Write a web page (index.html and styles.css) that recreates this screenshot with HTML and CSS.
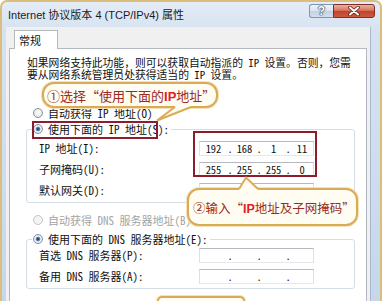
FILE: index.html
```html
<!DOCTYPE html>
<html lang="zh-CN">
<head>
<meta charset="utf-8">
<title>Internet 协议版本 4 (TCP/IPv4) 属性</title>
<link rel="stylesheet" href="styles.css">
</head>
<body>
<div class="frame">
  <div class="titlebar">
    <span class="title">Internet 协议版本 4 (TCP/IPv4) 属性</span>
    <div class="caption-btns">
      <span class="btn-help">?</span>
      <span class="btn-close">
        <svg width="14" height="10" viewBox="0 0 14 10">
          <path d="M3 1.5 L11 8.5 M11 1.5 L3 8.5" stroke="#6b1f17" stroke-width="3.6" stroke-linecap="round"/>
          <path d="M3 1.5 L11 8.5 M11 1.5 L3 8.5" stroke="#ffffff" stroke-width="2" stroke-linecap="round"/>
        </svg>
      </span>
    </div>
  </div>
  <div class="client">
    <div class="tabs"><span class="tab">常规</span></div>
    <div class="panel">
      <p class="intro"><span class="intro-line">如果网络支持此功能，则可以获取自动指派的 IP 设置。否则，您需</span><span class="intro-line">要从网络系统管理员处获得适当的 IP 设置。</span></p>

      <div class="radio-row outer"><span class="radio"></span><span>自动获得 IP 地址(O)</span></div>
      <fieldset class="group">
        <legend><span class="radio-row"><span class="radio checked"></span><span>使用下面的 IP 地址(S):</span></span></legend>
        <div class="field-row">
          <span class="label">IP 地址(I):</span>
          <div class="ip"><span class="seg s1">192</span><span class="dot">.</span><span class="seg s2">168</span><span class="dot">.</span><span class="seg s3">1</span><span class="dot">.</span><span class="seg s4">11</span></div>
        </div>
        <div class="field-row">
          <span class="label">子网掩码(U):</span>
          <div class="ip"><span class="seg s1">255</span><span class="dot">.</span><span class="seg s2">255</span><span class="dot">.</span><span class="seg s3">255</span><span class="dot">.</span><span class="seg s4">0</span></div>
        </div>
        <div class="field-row">
          <span class="label">默认网关(D):</span>
          <div class="ip"><span class="seg s1"></span><span class="dot">.</span><span class="seg s2"></span><span class="dot">.</span><span class="seg s3"></span><span class="dot">.</span><span class="seg s4"></span></div>
        </div>
      </fieldset>

      <div class="radio-row outer dns-auto disabled"><span class="radio off"></span><span>自动获得 DNS 服务器地址(B)</span></div>
      <fieldset class="group dns">
        <legend><span class="radio-row"><span class="radio checked"></span><span>使用下面的 DNS 服务器地址(E):</span></span></legend>
        <div class="field-row">
          <span class="label">首选 DNS 服务器(P):</span>
          <div class="ip"><span class="seg s1"></span><span class="dot">.</span><span class="seg s2"></span><span class="dot">.</span><span class="seg s3"></span><span class="dot">.</span><span class="seg s4"></span></div>
        </div>
        <div class="field-row">
          <span class="label">备用 DNS 服务器(A):</span>
          <div class="ip"><span class="seg s1"></span><span class="dot">.</span><span class="seg s2"></span><span class="dot">.</span><span class="seg s3"></span><span class="dot">.</span><span class="seg s4"></span></div>
        </div>
      </fieldset>
    </div>
  </div>
</div>

<div class="mark mark-a"></div>
<div class="mark mark-b"></div>

<div class="note note-1"><span>①选择“使用下面的<b>IP</b>地址”</span></div>
<div class="note note-2"><span>②输入“<b>IP</b>地址及子网掩码”</span></div>
<div class="note note-3"></div>

<svg class="tails" width="382" height="301" viewBox="0 0 382 301">
  <polygon points="176,104 175,107 157,120.5 191,107 190,104" fill="#fffcf2"/>
  <polyline points="175,107 157,120.5 191,107" fill="none" stroke="#d9ab57" stroke-width="2"/>
  <polygon points="239,191 239,189 246,177.5 258,189 258,191" fill="#fffcf2"/>
  <polyline points="239,189 246,177.5 258,189" fill="none" stroke="#d9ab57" stroke-width="2"/>
</svg>
</body>
</html>
```

FILE: styles.css
```css
* { box-sizing: border-box; }

html, body {
  margin: 0;
  padding: 0;
}

body {
  position: relative;
  width: 382px;
  height: 301px;
  overflow: hidden;
  background: #fff;
  font-family: "Noto Sans Mono CJK SC", "Liberation Mono", "Noto Sans CJK SC", monospace;
  font-size: 11px;
  color: #111;
}

.frame {
  width: 382px;
  height: 301px;
  overflow: hidden;
  border: 2px solid #dcbd7c;
  border-bottom: none;
  border-radius: 7px 7px 0 0;
  background: linear-gradient(to bottom, #e4ecf6 0, #d6e2f1 30px, #c6d7ec 100%);
  display: flex;
  flex-direction: column;
}

.titlebar {
  height: 25px;
  flex: none;
  display: flex;
  align-items: flex-start;
  padding-left: 6px;
}

.title {
  margin-top: 5px;
  line-height: 16px;
  font-family: "Liberation Sans", "Noto Sans CJK SC", sans-serif;
  font-size: 11px;
  color: #1b1b1b;
}

.caption-btns {
  margin-left: auto;
  margin-right: 5px;
  margin-top: 2px;
  display: flex;
  height: 14px;
}

.btn-help {
  width: 24px;
  height: 14px;
  border: 1px solid #8096b4;
  border-right: none;
  border-radius: 3px 0 0 3px;
  background: linear-gradient(to bottom, #f0f4f9 0, #d9e3ef 50%, #c3d1e3 51%, #d3dfee 100%);
  color: #fff;
  font-family: "Liberation Sans", sans-serif;
  font-weight: 700;
  font-size: 12px;
  line-height: 12px;
  text-align: center;
  text-shadow: 0 0 1px #2c3b52, 0 0 1px #2c3b52, 0 0 2px #2c3b52;
}

.btn-close {
  width: 42px;
  height: 14px;
  border: 1px solid #7e2e24;
  border-radius: 0 3px 3px 0;
  background: linear-gradient(to bottom, #eab1a4 0, #d8775f 45%, #c1432b 50%, #cc5a3f 100%);
  display: flex;
  align-items: center;
  justify-content: center;
}

.client {
  flex: 1;
  min-height: 0;
  margin: 0 9px 0 4px;
  background: #f0f0f0;
  border-right: 1px solid #a9b8cc;
  padding: 3px 3px 0 3px;
  display: flex;
  flex-direction: column;
}

.tabs {
  display: flex;
  padding-left: 5px;
  flex: none;
}

.tab {
  position: relative;
  z-index: 1;
  width: 44px;
  height: 19px;
  margin-bottom: -1px;
  padding: 1px 0 0 4px;
  line-height: 16px;
  background: #fff;
  border: 1px solid #b3b8c1;
  border-bottom: none;
  font-family: "Noto Sans CJK SC", sans-serif;
}

.panel {
  flex: 1;
  min-height: 0;
  background: #fff;
  border: 1px solid #b3b8c1;
  border-bottom: none;
  padding-top: 7px;
}

.intro {
  margin: 0 0 0 17px;
  display: flex;
  flex-direction: column;
  font-size: 10.8px;
  line-height: 12px;
  white-space: nowrap;
}

.intro-line {
  height: 12px;
}

.radio-row {
  display: flex;
  align-items: center;
  gap: 5px;
  height: 16px;
  line-height: 16px;
  white-space: nowrap;
}

.outer {
  margin: 25px 0 0 23px;
}

.dns-auto {
  margin-top: 9px;
}

.disabled {
  color: #a3a3a3;
}

.radio {
  flex: none;
  width: 10px;
  height: 10px;
  border-radius: 50%;
  border: 1px solid #8b9097;
  background: radial-gradient(circle at 50% 45%, #ffffff 0, #eceef0 50%, #cfd2d6 100%);
}

.radio.checked {
  background: radial-gradient(circle at 50% 50%, #1c3a66 0, #2f5c93 22%, #7ea9d8 38%, #eef2f6 48%, #e2e5e9 80%, #cdd1d6 100%);
}

.radio.off {
  border-color: #c3c6ca;
  background: #f4f4f4;
}

.group {
  margin: 0 11px 0 16px;
  padding: 4px 0 4px 0;
  border: 1px solid #d5dde5;
  border-radius: 3px;
  min-width: 0;
}

.group.dns {
  margin-top: 3px;
  padding-top: 1px;
}

.group legend {
  margin-left: 5px;
  padding: 0 2px 0 1px;
}

.field-row {
  display: flex;
  align-items: center;
  height: 15px;
  padding-left: 12px;
  white-space: nowrap;
}

.field-row + .field-row {
  margin-top: 6px;
}

.label {
  flex: none;
  width: 160px;
  line-height: 15px;
}

.ip {
  flex: none;
  width: 115px;
  height: 15px;
  display: flex;
  align-items: center;
  background: #fff;
  border: 1px solid;
  border-color: #b5b8be #dde1e7 #e5e9ee #dde1e7;
  font-size: 10.5px;
  line-height: 13px;
}

.seg { text-align: center; }
.s1 { width: 27px; }
.s2 { width: 23px; }
.s3 { width: 23px; }
.s4 { width: 22px; }

.dot {
  width: 6px;
  text-align: center;
}

.mark {
  position: absolute;
  border: 2px solid #8d1d2c;
}

.mark-a {
  left: 32px;
  top: 121px;
  width: 126px;
  height: 18px;
}

.mark-b {
  left: 193px;
  top: 131px;
  width: 124px;
  height: 46px;
}

.note {
  position: absolute;
  display: flex;
  align-items: center;
  background: #fffcf2;
  border: 2px solid #d9ab57;
  border-radius: 12px;
  box-shadow: 0 0 0 1px #f4e2b8;
  font-family: "Noto Sans CJK SC", sans-serif;
  color: #9c2a24;
  white-space: nowrap;
}

.note b {
  font-family: "Liberation Sans", sans-serif;
  font-weight: 700;
  color: #e3201c;
}

.note-1 {
  left: 42px;
  top: 82px;
  width: 176px;
  height: 26px;
  padding-left: 3px;
  font-size: 13px;
}

.note-2 {
  left: 187px;
  top: 188px;
  width: 171px;
  height: 38px;
  padding-left: 4px;
  font-size: 12.5px;
}

.note-3 {
  left: 157px;
  top: 296px;
  width: 88px;
  height: 5px;
  border-bottom: none;
  border-radius: 5px 5px 0 0;
}

.tails {
  position: absolute;
  left: 0;
  top: 0;
  pointer-events: none;
}
```
